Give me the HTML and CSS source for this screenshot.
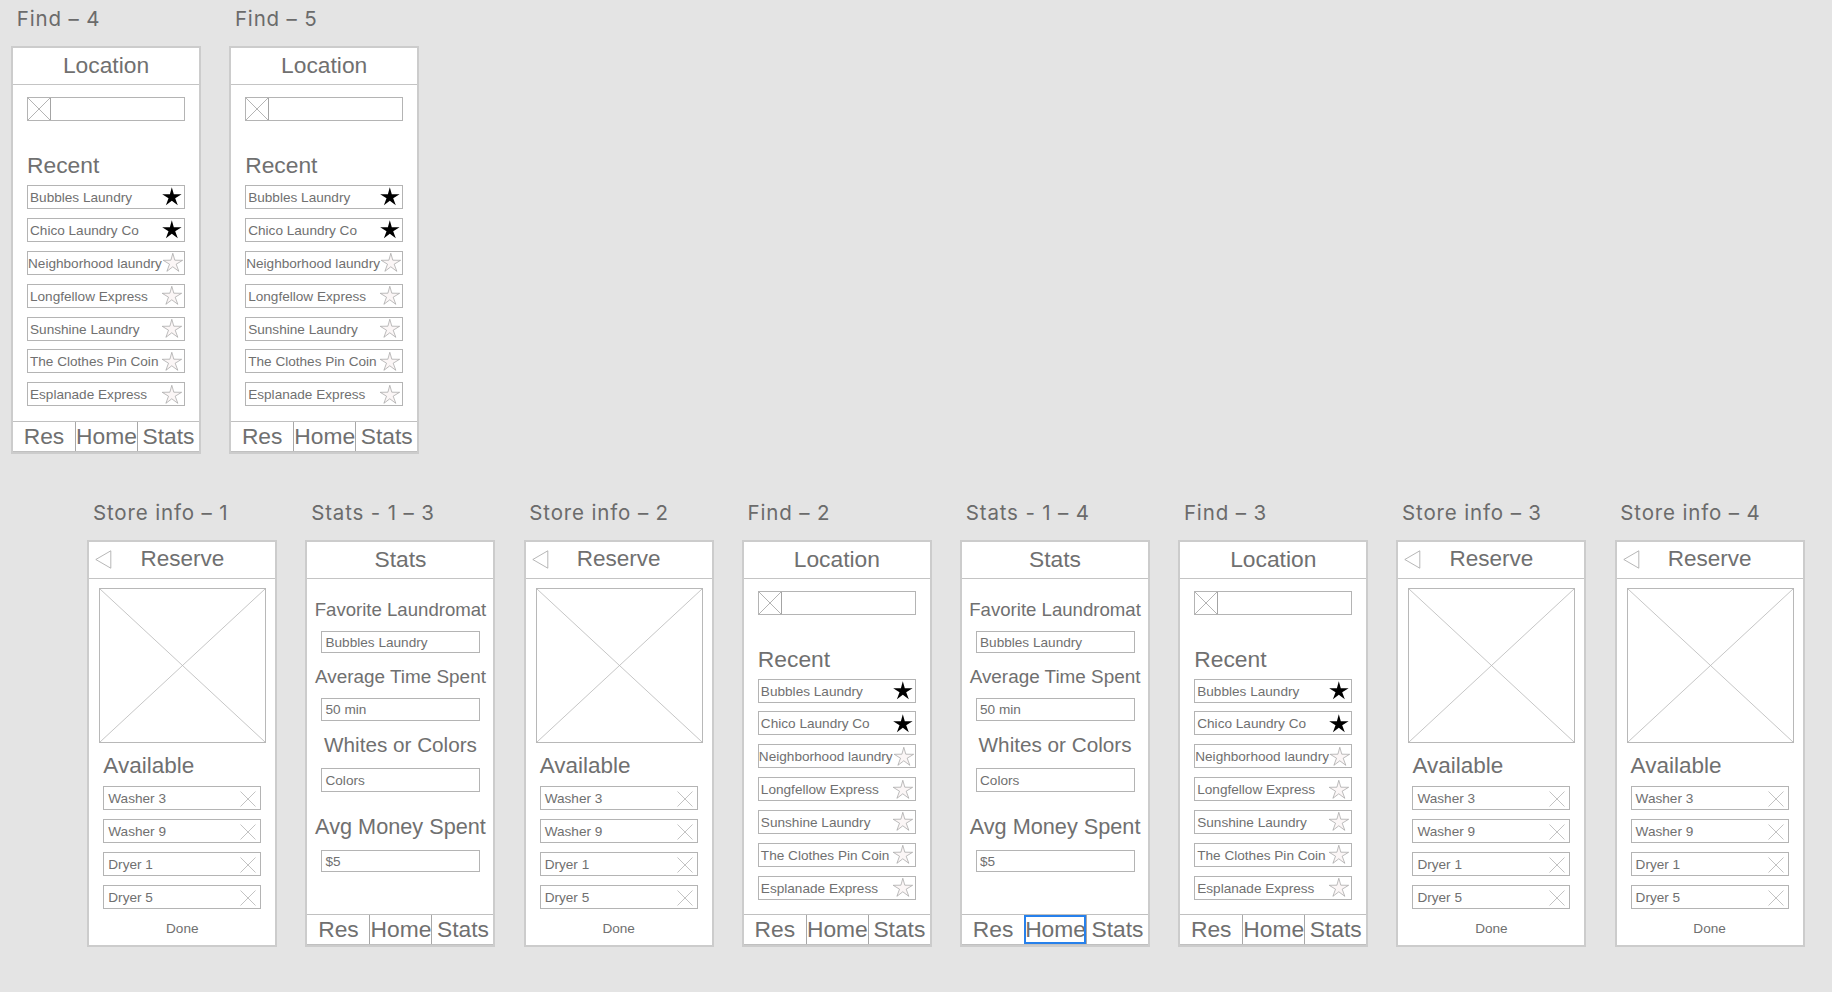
FILE: index.html
```html
<!DOCTYPE html>
<html lang="en">
<head>
<meta charset="utf-8">
<title>Laundry wireframes</title>
<link rel="stylesheet" href="styles.css">
</head>
<body>
<svg class="defs" aria-hidden="true">
  <symbol id="star" viewBox="0 0 20 19"><path d="M9.800 .3 11.800 7.200 19.600 7.300 13.200 11.200 15.800 18.300 9.800 13.800 3.900 18.300 6.500 11.200 .2 7.300 7.900 7.200Z"/></symbol>
  <symbol id="cross" viewBox="0 0 16 16"><path d="M.5 .5 15.500 15.500M15.500 .5 .5 15.500"/></symbol>
  <symbol id="back" viewBox="0 0 17 19"><path d="M.8 9.500 15.800 .8V18.200Z"/></symbol>
  <symbol id="diag" viewBox="0 0 100 100" preserveAspectRatio="none"><path d="M0 0 100 100M100 0 0 100" vector-effect="non-scaling-stroke"/></symbol>
</svg>
<main class="canvas">
  <div class="row row-top">
    <section class="item"><h2 class="title">Find – 4</h2>
      <div class="board">
        <header class="head">Location</header>
        <div class="search"><svg class="thumb"><use href="#diag"/></svg></div>
        <h3 class="heading">Recent</h3>
        <ul class="list">
          <li>Bubbles Laundry<svg class="star on"><use href="#star"/></svg></li>
          <li>Chico Laundry Co<svg class="star on"><use href="#star"/></svg></li>
          <li class="wide">Neighborhood laundry<svg class="star"><use href="#star"/></svg></li>
          <li>Longfellow Express<svg class="star"><use href="#star"/></svg></li>
          <li>Sunshine Laundry<svg class="star"><use href="#star"/></svg></li>
          <li>The Clothes Pin Coin<svg class="star"><use href="#star"/></svg></li>
          <li>Esplanade Express<svg class="star"><use href="#star"/></svg></li>
        </ul>
        <nav class="tabs"><span>Res</span><span>Home</span><span>Stats</span></nav>
      </div>
    </section>
    <section class="item"><h2 class="title">Find – 5</h2>
      <div class="board">
        <header class="head">Location</header>
        <div class="search"><svg class="thumb"><use href="#diag"/></svg></div>
        <h3 class="heading">Recent</h3>
        <ul class="list">
          <li>Bubbles Laundry<svg class="star on"><use href="#star"/></svg></li>
          <li>Chico Laundry Co<svg class="star on"><use href="#star"/></svg></li>
          <li class="wide">Neighborhood laundry<svg class="star"><use href="#star"/></svg></li>
          <li>Longfellow Express<svg class="star"><use href="#star"/></svg></li>
          <li>Sunshine Laundry<svg class="star"><use href="#star"/></svg></li>
          <li>The Clothes Pin Coin<svg class="star"><use href="#star"/></svg></li>
          <li>Esplanade Express<svg class="star"><use href="#star"/></svg></li>
        </ul>
        <nav class="tabs"><span>Res</span><span>Home</span><span>Stats</span></nav>
      </div>
    </section>
  </div>
  <div class="row row-bottom">
    <section class="item"><h2 class="title">Store info – 1</h2>
      <div class="board">
        <header class="head reserve"><svg class="back"><use href="#back"/></svg>Reserve</header>
        <svg class="photo"><use href="#diag"/></svg>
        <h3 class="heading available">Available</h3>
        <ul class="list machines">
          <li>Washer 3<svg class="cross"><use href="#cross"/></svg></li>
          <li>Washer 9<svg class="cross"><use href="#cross"/></svg></li>
          <li>Dryer 1<svg class="cross"><use href="#cross"/></svg></li>
          <li>Dryer 5<svg class="cross"><use href="#cross"/></svg></li>
        </ul>
        <p class="done">Done</p>
      </div>
    </section>
    <section class="item"><h2 class="title">Stats - 1 – 3</h2>
      <div class="board">
        <header class="head">Stats</header>
        <h3 class="label favorite">Favorite Laundromat</h3>
        <p class="value">Bubbles Laundry</p>
        <h3 class="label average">Average Time Spent</h3>
        <p class="value">50 min</p>
        <h3 class="label whites">Whites or Colors</h3>
        <p class="value low">Colors</p>
        <h3 class="label money">Avg Money Spent</h3>
        <p class="value">$5</p>
        <nav class="tabs"><span>Res</span><span>Home</span><span>Stats</span></nav>
      </div>
    </section>
    <section class="item"><h2 class="title">Store info – 2</h2>
      <div class="board">
        <header class="head reserve"><svg class="back"><use href="#back"/></svg>Reserve</header>
        <svg class="photo"><use href="#diag"/></svg>
        <h3 class="heading available">Available</h3>
        <ul class="list machines">
          <li>Washer 3<svg class="cross"><use href="#cross"/></svg></li>
          <li>Washer 9<svg class="cross"><use href="#cross"/></svg></li>
          <li>Dryer 1<svg class="cross"><use href="#cross"/></svg></li>
          <li>Dryer 5<svg class="cross"><use href="#cross"/></svg></li>
        </ul>
        <p class="done">Done</p>
      </div>
    </section>
    <section class="item"><h2 class="title">Find – 2</h2>
      <div class="board">
        <header class="head">Location</header>
        <div class="search"><svg class="thumb"><use href="#diag"/></svg></div>
        <h3 class="heading">Recent</h3>
        <ul class="list">
          <li>Bubbles Laundry<svg class="star on"><use href="#star"/></svg></li>
          <li>Chico Laundry Co<svg class="star on"><use href="#star"/></svg></li>
          <li class="wide">Neighborhood laundry<svg class="star"><use href="#star"/></svg></li>
          <li>Longfellow Express<svg class="star"><use href="#star"/></svg></li>
          <li>Sunshine Laundry<svg class="star"><use href="#star"/></svg></li>
          <li>The Clothes Pin Coin<svg class="star"><use href="#star"/></svg></li>
          <li>Esplanade Express<svg class="star"><use href="#star"/></svg></li>
        </ul>
        <nav class="tabs"><span>Res</span><span>Home</span><span>Stats</span></nav>
      </div>
    </section>
    <section class="item"><h2 class="title">Stats - 1 – 4</h2>
      <div class="board">
        <header class="head">Stats</header>
        <h3 class="label favorite">Favorite Laundromat</h3>
        <p class="value">Bubbles Laundry</p>
        <h3 class="label average">Average Time Spent</h3>
        <p class="value">50 min</p>
        <h3 class="label whites">Whites or Colors</h3>
        <p class="value low">Colors</p>
        <h3 class="label money">Avg Money Spent</h3>
        <p class="value">$5</p>
        <nav class="tabs"><span>Res</span><span class="selected">Home</span><span>Stats</span></nav>
      </div>
    </section>
    <section class="item"><h2 class="title">Find – 3</h2>
      <div class="board">
        <header class="head">Location</header>
        <div class="search"><svg class="thumb"><use href="#diag"/></svg></div>
        <h3 class="heading">Recent</h3>
        <ul class="list">
          <li>Bubbles Laundry<svg class="star on"><use href="#star"/></svg></li>
          <li>Chico Laundry Co<svg class="star on"><use href="#star"/></svg></li>
          <li class="wide">Neighborhood laundry<svg class="star"><use href="#star"/></svg></li>
          <li>Longfellow Express<svg class="star"><use href="#star"/></svg></li>
          <li>Sunshine Laundry<svg class="star"><use href="#star"/></svg></li>
          <li>The Clothes Pin Coin<svg class="star"><use href="#star"/></svg></li>
          <li>Esplanade Express<svg class="star"><use href="#star"/></svg></li>
        </ul>
        <nav class="tabs"><span>Res</span><span>Home</span><span>Stats</span></nav>
      </div>
    </section>
    <section class="item"><h2 class="title">Store info – 3</h2>
      <div class="board">
        <header class="head reserve"><svg class="back"><use href="#back"/></svg>Reserve</header>
        <svg class="photo"><use href="#diag"/></svg>
        <h3 class="heading available">Available</h3>
        <ul class="list machines">
          <li>Washer 3<svg class="cross"><use href="#cross"/></svg></li>
          <li>Washer 9<svg class="cross"><use href="#cross"/></svg></li>
          <li>Dryer 1<svg class="cross"><use href="#cross"/></svg></li>
          <li>Dryer 5<svg class="cross"><use href="#cross"/></svg></li>
        </ul>
        <p class="done">Done</p>
      </div>
    </section>
    <section class="item"><h2 class="title">Store info – 4</h2>
      <div class="board">
        <header class="head reserve"><svg class="back"><use href="#back"/></svg>Reserve</header>
        <svg class="photo"><use href="#diag"/></svg>
        <h3 class="heading available">Available</h3>
        <ul class="list machines">
          <li>Washer 3<svg class="cross"><use href="#cross"/></svg></li>
          <li>Washer 9<svg class="cross"><use href="#cross"/></svg></li>
          <li>Dryer 1<svg class="cross"><use href="#cross"/></svg></li>
          <li>Dryer 5<svg class="cross"><use href="#cross"/></svg></li>
        </ul>
        <p class="done">Done</p>
      </div>
    </section>
  </div>
</main>
</body>
</html>
```

FILE: styles.css
```css
* { box-sizing: border-box; margin: 0; padding: 0; }
body { background: #e4e4e4; color: #707070; font-family: "Liberation Sans", Arial, sans-serif; }
.defs { display: block; width: 0; height: 0; }
.canvas { width: 1832px; height: 992px; overflow: hidden; padding-top: 7px; }
.row { display: flex; gap: 28.200px; }
.row-top { padding-left: 11px; }
.row-bottom { padding-left: 87.300px; margin-top: 47px; }
.item { width: 190px; flex: none; }
.title {
  margin: 0 0 15px 5.700px;
  font: 400 20.500px/24px Inter, sans-serif;
  letter-spacing: 0.850px;
  color: #6b6b6b;
  white-space: nowrap;
}
.board {
  display: flex;
  flex-direction: column;
  height: 407.600px;
  background: #fff;
  border: 2px solid #ccc;
}
.head {
  display: flex;
  justify-content: center;
  position: relative;
  height: 37px;
  border-bottom: 1px solid #c4c4c4;
  font-size: 22.800px;
  line-height: 34px;
}
.reserve { font-size: 22.500px; }
.back { position: absolute; left: 6px; top: 8px; width: 17px; height: 19px; fill: none; stroke: #a4a4a4; stroke-width: 0.8; }
.search { width: 158px; height: 24px; margin: 12px 0 0 14px; border: 1px solid #b4b4b4; }
.thumb { display: block; width: 23px; height: 22px; border-right: 1px solid #a4a4a4; fill: none; stroke: #b4b4b4; }
.heading { margin: 31px 0 7px 14px; font-size: 22.800px; font-weight: 400; line-height: 26px; }
.list { display: flex; flex-direction: column; gap: 8.900px; width: 158px; margin-left: 14px; list-style: none; }
.list li {
  display: flex;
  justify-content: space-between;
  height: 24px;
  padding: 0 2px 0 2px;
  border: 1px solid #b4b4b4;
  font-size: 13.600px;
  line-height: 24px;
  white-space: nowrap;
}
.list .wide { padding: 0 1px 0 0; }
.star { flex: none; width: 20px; height: 19px; margin-top: 1.300px; fill: #fbf6f6; stroke: #a0a0a0; stroke-width: 0.7; }
.star.on { fill: #000; stroke: none; }
.tabs {
  display: grid;
  grid-template-columns: repeat(3, 1fr);
  height: 31px;
  margin-top: auto;
  border: solid #c0c0c0;
  border-width: 1px 0;
  font-size: 22.800px;
  line-height: 29px;
}
.tabs span { display: flex; justify-content: center; min-width: 0; }
.tabs span + span { border-left: 1px solid #a8a8a8; }
.tabs .selected { outline: 2px solid #2680eb; outline-offset: -2px; }
.photo { display: block; width: 167px; height: 155px; margin: 9.700px 0 0 10px; border: 1px solid #b8b8b8; fill: none; stroke: #b8b8b8; stroke-width: 0.8; }
.available { margin: 9.600px 0 6.700px 14px; font-size: 22.500px; }
.machines { gap: 9.300px; }
.machines li { padding: 0 4px 0 4px; }
.cross { width: 16px; height: 16px; margin-top: 4px; fill: none; stroke: #b4b4b4; stroke-width: 0.8; }
.done { margin-top: 11px; font-size: 13.600px; line-height: 18px; text-align: center; }
.label { font-weight: 400; line-height: 24px; text-align: center; white-space: nowrap; }
.favorite { margin-top: 19.600px; font-size: 18.600px; }
.average { margin-top: 12px; font-size: 18.900px; }
.whites { margin-top: 12.700px; font-size: 20.700px; }
.money { margin-top: 23.500px; font-size: 21.700px; }
.value {
  width: 159px;
  height: 22.500px;
  margin: 8.700px 0 0 14px;
  padding-left: 3px;
  border: 1px solid #b4b4b4;
  font-size: 13.600px;
  line-height: 21px;
}
.value.low { height: 23.500px; margin-top: 10.800px; line-height: 23px; }
.money + .value { margin-top: 10.800px; }
```
